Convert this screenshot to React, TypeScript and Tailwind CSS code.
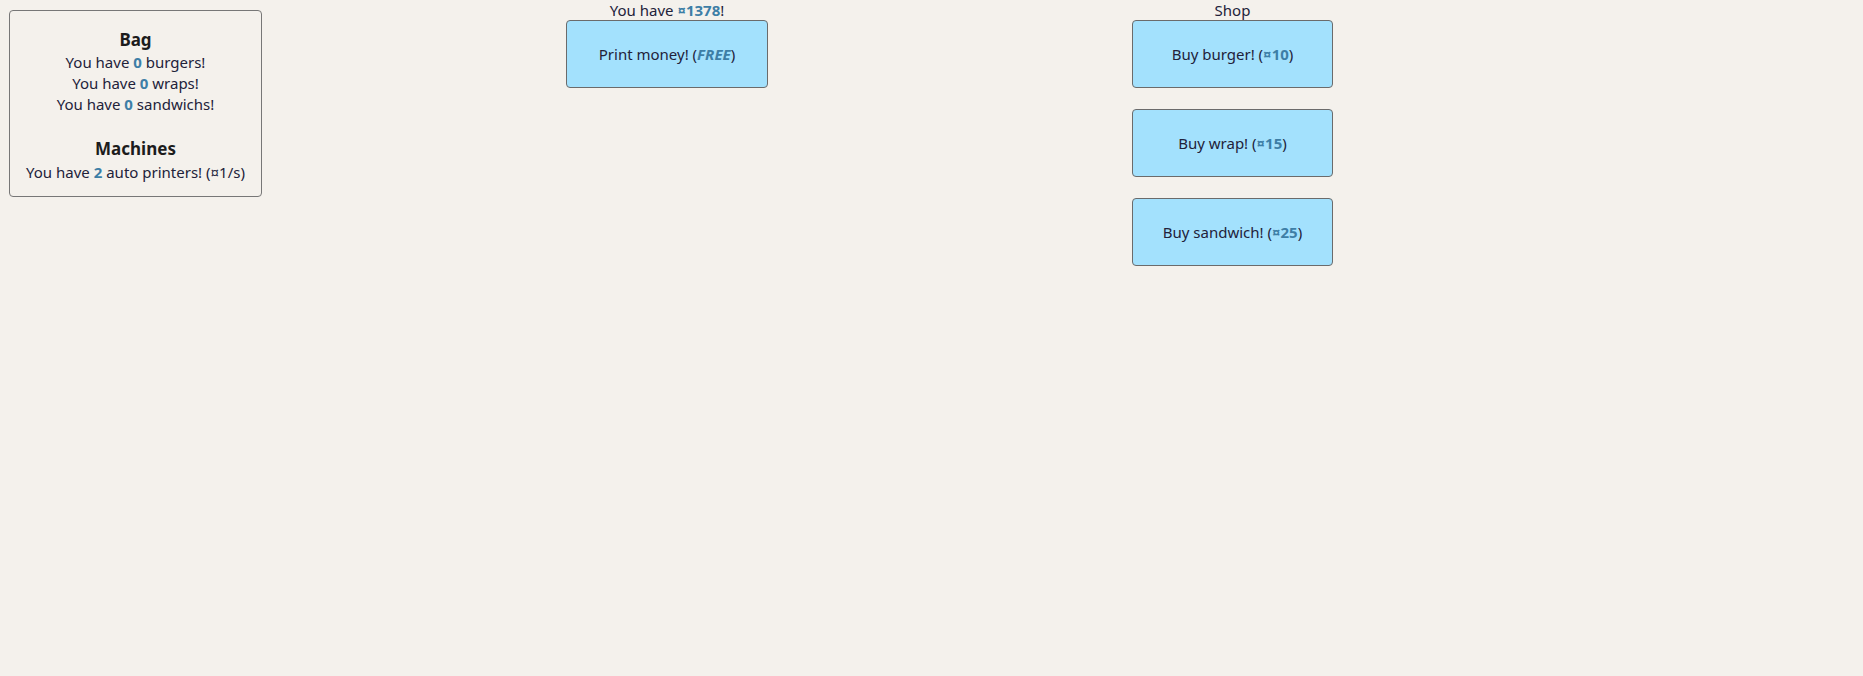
import React from 'react';

const font = { fontFamily: '"Noto Sans", "Open Sans", sans-serif' };

const Num: React.FC<{ children: React.ReactNode; italic?: boolean }> = ({ children, italic }) => (
  <b className={`font-bold text-[#3d7ea6] ${italic ? 'italic' : ''}`}>{children}</b>
);

const ShopButton: React.FC<{ children: React.ReactNode }> = ({ children }) => (
  <button className="w-full h-[68px] bg-[#a3e1fd] border border-[#6b6b6b] rounded-[4px] text-[15px] text-[#22223a]">
    {children}
  </button>
);

export default function App() {
  const items = [
    { name: 'burgers', count: 0 },
    { name: 'wraps', count: 0 },
    { name: 'sandwichs', count: 0 },
  ];

  return (
    <div className="min-h-[676px] bg-[#f4f1ec] text-[#22223a] text-[15px] leading-[21px]" style={font}>
      <div className="flex items-start">
        {/* Bag */}
        <div className="ml-[9px] mt-[10px] w-[253px] border border-[#777] rounded-[4px] pt-[17px] pb-[13px] text-center">
          <h3 className="text-[17px] leading-[24px] font-bold text-[#1c1c1c]">Bag</h3>
          {items.map((it) => (
            <div key={it.name}>
              You have <Num>{it.count}</Num> {it.name}!
            </div>
          ))}
          <h3 className="mt-[22px] mb-[1px] text-[17px] leading-[24px] font-bold text-[#1c1c1c]">Machines</h3>
          <div>
            You have <Num>2</Num> auto printers! (¤1/s)
          </div>
        </div>

        {/* Money */}
        <div className="ml-[304px] w-[202px] text-center">
          <div className="h-[20px] leading-[20px]">
            You have <Num>¤1378</Num>!
          </div>
          <ShopButton>
            Print money! (<Num italic>FREE</Num>)
          </ShopButton>
        </div>

        {/* Shop */}
        <div className="ml-[364px] w-[201px] text-center">
          <div className="h-[20px] leading-[20px]">Shop</div>
          <div className="flex flex-col gap-[21px]">
            <ShopButton>
              Buy burger! (<Num>¤10</Num>)
            </ShopButton>
            <ShopButton>
              Buy wrap! (<Num>¤15</Num>)
            </ShopButton>
            <ShopButton>
              Buy sandwich! (<Num>¤25</Num>)
            </ShopButton>
          </div>
        </div>
      </div>
    </div>
  );
}
